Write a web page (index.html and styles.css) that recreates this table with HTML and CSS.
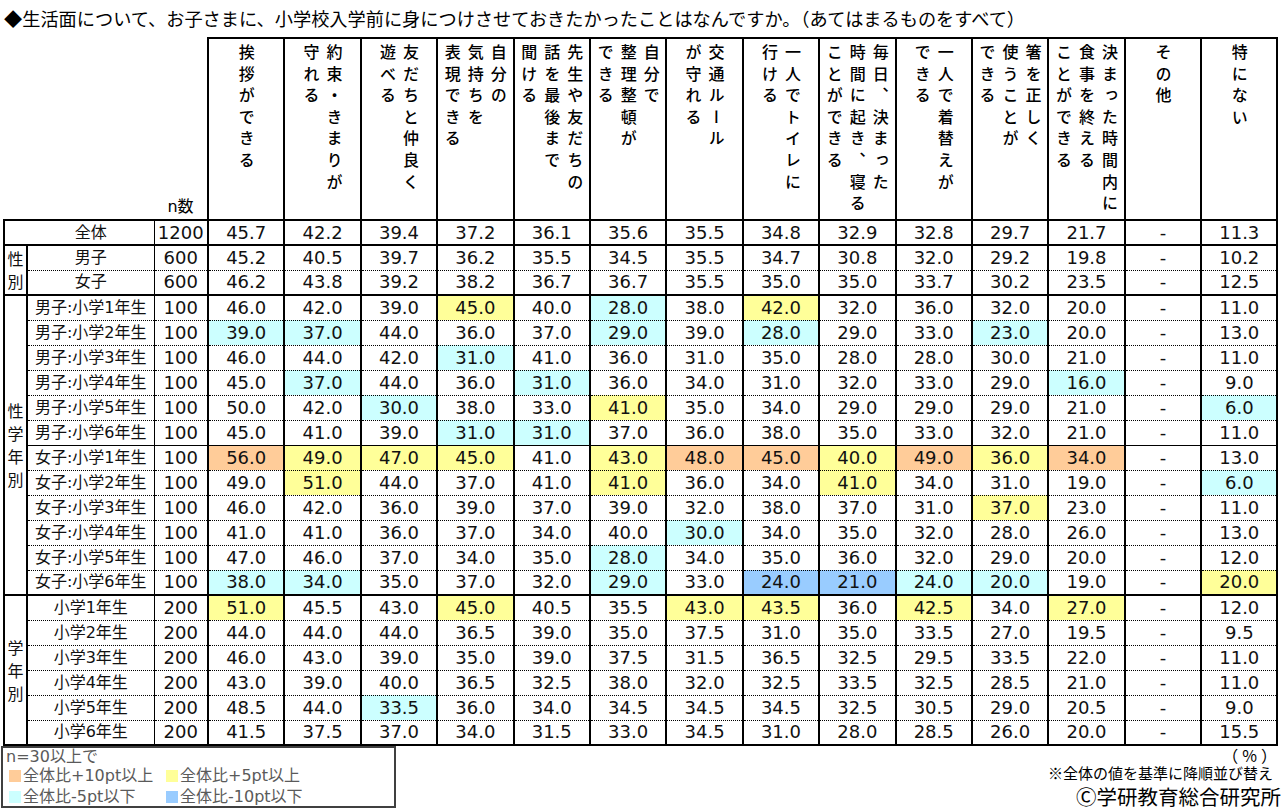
FILE: index.html
```html
<!DOCTYPE html>
<html lang="ja">
<head>
<meta charset="utf-8">
<title>生活面について</title>
<link rel="stylesheet" href="styles.css">
</head>
<body>
<div class="page">
  <div class="title">◆生活面について、お子さまに、小学校入学前に身につけさせておきたかったことはなんですか。（あてはまるものをすべて）</div>
  <table class="grid">
    <colgroup>
      <col class="c-grp"><col class="c-lbl"><col class="c-n">
      <col class="c-d"><col class="c-d"><col class="c-d"><col class="c-d"><col class="c-d"><col class="c-d"><col class="c-d">
      <col class="c-d"><col class="c-d"><col class="c-d"><col class="c-d"><col class="c-d"><col class="c-d"><col class="c-d">
    </colgroup>
    <thead>
      <tr class="head">
        <th class="blank" colspan="2"></th>
        <th class="nh">n数</th>
        <th class="h"><div class="hw"><div class="vt">挨拶ができる</div></div></th>
        <th class="h"><div class="hw"><div class="vt">約束・きまりが<br>守れる</div></div></th>
        <th class="h"><div class="hw"><div class="vt">友だちと仲良く<br>遊べる</div></div></th>
        <th class="h"><div class="hw"><div class="vt">自分の<br>気持ちを<br>表現できる</div></div></th>
        <th class="h"><div class="hw"><div class="vt">先生や友だちの<br>話を最後まで<br>聞ける</div></div></th>
        <th class="h"><div class="hw"><div class="vt">自分で<br>整理整頓が<br>できる</div></div></th>
        <th class="h"><div class="hw"><div class="vt">交通ルール<br>が守れる</div></div></th>
        <th class="h"><div class="hw"><div class="vt">一人でトイレに<br>行ける</div></div></th>
        <th class="h"><div class="hw"><div class="vt">毎日、決まった<br>時間に起き、寝る<br>ことができる</div></div></th>
        <th class="h"><div class="hw"><div class="vt">一人で着替えが<br>できる</div></div></th>
        <th class="h"><div class="hw"><div class="vt">箸を正しく<br>使うことが<br>できる</div></div></th>
        <th class="h"><div class="hw"><div class="vt">決まった時間内に<br>食事を終える<br>ことができる</div></div></th>
        <th class="h"><div class="hw"><div class="vt">その他</div></div></th>
        <th class="h"><div class="hw"><div class="vt">特にない</div></div></th>
      </tr>
    </thead>
    <tbody>
      <tr class="all">
        <td class="lbl tot" colspan="2">全体</td><td class="n">1200</td>
        <td class="d">45.7</td><td class="d">42.2</td><td class="d">39.4</td><td class="d">37.2</td><td class="d">36.1</td><td class="d">35.6</td><td class="d">35.5</td><td class="d">34.8</td><td class="d">32.9</td><td class="d">32.8</td><td class="d">29.7</td><td class="d">21.7</td><td class="d">-</td><td class="d">11.3</td>
      </tr>
      <tr>
        <td class="grp" rowspan="2">性<br>別</td>
        <td class="lbl">男子</td><td class="n">600</td>
        <td class="d">45.2</td><td class="d">40.5</td><td class="d">39.7</td><td class="d">36.2</td><td class="d">35.5</td><td class="d">34.5</td><td class="d">35.5</td><td class="d">34.7</td><td class="d">30.8</td><td class="d">32.0</td><td class="d">29.2</td><td class="d">19.8</td><td class="d">-</td><td class="d">10.2</td>
      </tr>
      <tr class="gend">
        <td class="lbl">女子</td><td class="n">600</td>
        <td class="d">46.2</td><td class="d">43.8</td><td class="d">39.2</td><td class="d">38.2</td><td class="d">36.7</td><td class="d">36.7</td><td class="d">35.5</td><td class="d">35.0</td><td class="d">35.0</td><td class="d">33.7</td><td class="d">30.2</td><td class="d">23.5</td><td class="d">-</td><td class="d">12.5</td>
      </tr>
      <tr>
        <td class="grp" rowspan="12">性<br>学<br>年<br>別</td>
        <td class="lbl">男子:小学1年生</td><td class="n">100</td>
        <td class="d">46.0</td><td class="d">42.0</td><td class="d">39.0</td><td class="d y">45.0</td><td class="d">40.0</td><td class="d c">28.0</td><td class="d">38.0</td><td class="d y">42.0</td><td class="d">32.0</td><td class="d">36.0</td><td class="d">32.0</td><td class="d">20.0</td><td class="d">-</td><td class="d">11.0</td>
      </tr>
      <tr>
        <td class="lbl">男子:小学2年生</td><td class="n">100</td>
        <td class="d c">39.0</td><td class="d c">37.0</td><td class="d">44.0</td><td class="d">36.0</td><td class="d">37.0</td><td class="d c">29.0</td><td class="d">39.0</td><td class="d c">28.0</td><td class="d">29.0</td><td class="d">33.0</td><td class="d c">23.0</td><td class="d">20.0</td><td class="d">-</td><td class="d">13.0</td>
      </tr>
      <tr>
        <td class="lbl">男子:小学3年生</td><td class="n">100</td>
        <td class="d">46.0</td><td class="d">44.0</td><td class="d">42.0</td><td class="d c">31.0</td><td class="d">41.0</td><td class="d">36.0</td><td class="d">31.0</td><td class="d">35.0</td><td class="d">28.0</td><td class="d">28.0</td><td class="d">30.0</td><td class="d">21.0</td><td class="d">-</td><td class="d">11.0</td>
      </tr>
      <tr>
        <td class="lbl">男子:小学4年生</td><td class="n">100</td>
        <td class="d">45.0</td><td class="d c">37.0</td><td class="d">44.0</td><td class="d">36.0</td><td class="d c">31.0</td><td class="d">36.0</td><td class="d">34.0</td><td class="d">31.0</td><td class="d">32.0</td><td class="d">33.0</td><td class="d">29.0</td><td class="d c">16.0</td><td class="d">-</td><td class="d">9.0</td>
      </tr>
      <tr>
        <td class="lbl">男子:小学5年生</td><td class="n">100</td>
        <td class="d">50.0</td><td class="d">42.0</td><td class="d c">30.0</td><td class="d">38.0</td><td class="d">33.0</td><td class="d y">41.0</td><td class="d">35.0</td><td class="d">34.0</td><td class="d">29.0</td><td class="d">29.0</td><td class="d">29.0</td><td class="d">21.0</td><td class="d">-</td><td class="d c">6.0</td>
      </tr>
      <tr class="mid">
        <td class="lbl">男子:小学6年生</td><td class="n">100</td>
        <td class="d">45.0</td><td class="d">41.0</td><td class="d">39.0</td><td class="d c">31.0</td><td class="d c">31.0</td><td class="d">37.0</td><td class="d">36.0</td><td class="d">38.0</td><td class="d">35.0</td><td class="d">33.0</td><td class="d">32.0</td><td class="d">21.0</td><td class="d">-</td><td class="d">11.0</td>
      </tr>
      <tr>
        <td class="lbl">女子:小学1年生</td><td class="n">100</td>
        <td class="d o">56.0</td><td class="d y">49.0</td><td class="d y">47.0</td><td class="d y">45.0</td><td class="d">41.0</td><td class="d y">43.0</td><td class="d o">48.0</td><td class="d o">45.0</td><td class="d y">40.0</td><td class="d o">49.0</td><td class="d y">36.0</td><td class="d o">34.0</td><td class="d">-</td><td class="d">13.0</td>
      </tr>
      <tr>
        <td class="lbl">女子:小学2年生</td><td class="n">100</td>
        <td class="d">49.0</td><td class="d y">51.0</td><td class="d">44.0</td><td class="d">37.0</td><td class="d">41.0</td><td class="d y">41.0</td><td class="d">36.0</td><td class="d">34.0</td><td class="d y">41.0</td><td class="d">34.0</td><td class="d">31.0</td><td class="d">19.0</td><td class="d">-</td><td class="d c">6.0</td>
      </tr>
      <tr>
        <td class="lbl">女子:小学3年生</td><td class="n">100</td>
        <td class="d">46.0</td><td class="d">42.0</td><td class="d">36.0</td><td class="d">39.0</td><td class="d">37.0</td><td class="d">39.0</td><td class="d">32.0</td><td class="d">38.0</td><td class="d">37.0</td><td class="d">31.0</td><td class="d y">37.0</td><td class="d">23.0</td><td class="d">-</td><td class="d">11.0</td>
      </tr>
      <tr>
        <td class="lbl">女子:小学4年生</td><td class="n">100</td>
        <td class="d">41.0</td><td class="d">41.0</td><td class="d">36.0</td><td class="d">37.0</td><td class="d">34.0</td><td class="d">40.0</td><td class="d c">30.0</td><td class="d">34.0</td><td class="d">35.0</td><td class="d">32.0</td><td class="d">28.0</td><td class="d">26.0</td><td class="d">-</td><td class="d">13.0</td>
      </tr>
      <tr>
        <td class="lbl">女子:小学5年生</td><td class="n">100</td>
        <td class="d">47.0</td><td class="d">46.0</td><td class="d">37.0</td><td class="d">34.0</td><td class="d">35.0</td><td class="d c">28.0</td><td class="d">34.0</td><td class="d">35.0</td><td class="d">36.0</td><td class="d">32.0</td><td class="d">29.0</td><td class="d">20.0</td><td class="d">-</td><td class="d">12.0</td>
      </tr>
      <tr class="gend">
        <td class="lbl">女子:小学6年生</td><td class="n">100</td>
        <td class="d c">38.0</td><td class="d c">34.0</td><td class="d">35.0</td><td class="d">37.0</td><td class="d">32.0</td><td class="d c">29.0</td><td class="d">33.0</td><td class="d b">24.0</td><td class="d b">21.0</td><td class="d c">24.0</td><td class="d c">20.0</td><td class="d">19.0</td><td class="d">-</td><td class="d y">20.0</td>
      </tr>
      <tr>
        <td class="grp" rowspan="6">学<br>年<br>別</td>
        <td class="lbl">小学1年生</td><td class="n">200</td>
        <td class="d y">51.0</td><td class="d">45.5</td><td class="d">43.0</td><td class="d y">45.0</td><td class="d">40.5</td><td class="d">35.5</td><td class="d y">43.0</td><td class="d y">43.5</td><td class="d">36.0</td><td class="d y">42.5</td><td class="d">34.0</td><td class="d y">27.0</td><td class="d">-</td><td class="d">12.0</td>
      </tr>
      <tr>
        <td class="lbl">小学2年生</td><td class="n">200</td>
        <td class="d">44.0</td><td class="d">44.0</td><td class="d">44.0</td><td class="d">36.5</td><td class="d">39.0</td><td class="d">35.0</td><td class="d">37.5</td><td class="d">31.0</td><td class="d">35.0</td><td class="d">33.5</td><td class="d">27.0</td><td class="d">19.5</td><td class="d">-</td><td class="d">9.5</td>
      </tr>
      <tr>
        <td class="lbl">小学3年生</td><td class="n">200</td>
        <td class="d">46.0</td><td class="d">43.0</td><td class="d">39.0</td><td class="d">35.0</td><td class="d">39.0</td><td class="d">37.5</td><td class="d">31.5</td><td class="d">36.5</td><td class="d">32.5</td><td class="d">29.5</td><td class="d">33.5</td><td class="d">22.0</td><td class="d">-</td><td class="d">11.0</td>
      </tr>
      <tr>
        <td class="lbl">小学4年生</td><td class="n">200</td>
        <td class="d">43.0</td><td class="d">39.0</td><td class="d">40.0</td><td class="d">36.5</td><td class="d">32.5</td><td class="d">38.0</td><td class="d">32.0</td><td class="d">32.5</td><td class="d">33.5</td><td class="d">32.5</td><td class="d">28.5</td><td class="d">21.0</td><td class="d">-</td><td class="d">11.0</td>
      </tr>
      <tr>
        <td class="lbl">小学5年生</td><td class="n">200</td>
        <td class="d">48.5</td><td class="d">44.0</td><td class="d c">33.5</td><td class="d">36.0</td><td class="d">34.0</td><td class="d">34.5</td><td class="d">34.5</td><td class="d">34.5</td><td class="d">32.5</td><td class="d">30.5</td><td class="d">29.0</td><td class="d">20.5</td><td class="d">-</td><td class="d">9.0</td>
      </tr>
      <tr class="gend">
        <td class="lbl">小学6年生</td><td class="n">200</td>
        <td class="d">41.5</td><td class="d">37.5</td><td class="d">37.0</td><td class="d">34.0</td><td class="d">31.5</td><td class="d">33.0</td><td class="d">34.5</td><td class="d">31.0</td><td class="d">28.0</td><td class="d">28.5</td><td class="d">26.0</td><td class="d">20.0</td><td class="d">-</td><td class="d">15.5</td>
      </tr>
    </tbody>
  </table>
  <div class="foot">
    <div class="legend">
      <div class="lrow first">n=30以上で</div>
      <div class="lrow">
        <span class="item"><span class="sw sw-o"></span>全体比+10pt以上</span>
        <span class="item"><span class="sw sw-y"></span>全体比+5pt以上</span>
      </div>
      <div class="lrow">
        <span class="item"><span class="sw sw-c"></span>全体比-5pt以下</span>
        <span class="item"><span class="sw sw-b"></span>全体比-10pt以下</span>
      </div>
    </div>
    <div class="notes">
      <div class="pct">（%）</div>
      <div class="sort">※全体の値を基準に降順並び替え</div>
      <div class="copy">Ⓒ学研教育総合研究所</div>
    </div>
  </div>
</div>
</body>
</html>
```

FILE: styles.css
```css
* { box-sizing: border-box; }

body {
  margin: 0;
  background: #fff;
  color: #000;
  font-family: "DejaVu Sans", "Noto Sans CJK JP", sans-serif;
}

.page {
  width: 1281px;
  height: 810px;
  overflow: hidden;
}

.title {
  height: 37px;
  line-height: 37px;
  padding-left: 4px;
  font-family: "Noto Sans CJK JP", sans-serif;
  font-size: 18.2px;
  white-space: nowrap;
}

.grid {
  border-collapse: collapse;
  table-layout: fixed;
  width: 1274px;
  margin-left: 3px;
}

.c-grp { width: 23px; }
.c-lbl { width: 127px; }
.c-n { width: 54px; }
.c-d { width: 76.4px; }

.grid th {
  padding: 0;
  font-weight: normal;
}

.grid th.blank { border: none; }

.grid th.nh {
  border: none;
  vertical-align: bottom;
  font-size: 16px;
  line-height: 20px;
  padding-bottom: 2px;
  font-family: "DejaVu Sans", "Noto Sans CJK JP", sans-serif;
}

.grid th.h {
  border: 2px solid #000;
  vertical-align: top;
  height: 182px;
  padding-top: 5px;
}

.hw {
  display: flex;
  justify-content: center;
}

.vt {
  writing-mode: vertical-rl;
  font-family: "Noto Sans CJK JP", sans-serif;
  font-size: 16px;
  font-weight: 500;
  line-height: 23px;
  letter-spacing: 5.6px;
  text-align: left;
}

.grid td {
  padding: 0;
  height: 25px;
  line-height: 22px;
  text-align: center;
  vertical-align: middle;
  white-space: nowrap;
  border-bottom: 1px dotted #000;
  color: #111;
}

.grid td.d {
  border-left: 2px solid #000;
  border-right: 2px solid #000;
  font-size: 18px;
}

.grid td.n {
  border-left: 1px solid #000;
  border-right: 2px solid #000;
  font-size: 18px;
}

.grid td.lbl {
  border-left: 2px solid #000;
  border-right: 1px solid #000;
  font-size: 16px;
}

.grid td.tot { padding-left: 23px; }

.grid td.grp {
  border: 2px solid #000;
  font-family: "Noto Sans CJK JP", sans-serif;
  font-size: 16px;
  line-height: 23px;
  text-align: center;
  padding-left: 0;
}

.grid tr.all td {
  border-top: 2px solid #000;
  border-bottom: 2px solid #000;
}

.grid tr.gend td { border-bottom: 2px solid #000; }
.grid tr.mid td { border-bottom: 1px solid #000; }

.grid td.o { background: #ffcc99; }
.grid td.y { background: #ffff99; }
.grid td.c { background: #ccffff; }
.grid td.b { background: #99ccff; }

.foot {
  display: flex;
  justify-content: space-between;
  align-items: flex-start;
}

.legend {
  width: 395px;
  height: 62px;
  margin-left: 1px;
  border: 2px solid #404040;
  padding: 0 0 0 3px;
  color: #5a5a5a;
  font-size: 16px;
  line-height: 21px;
}

.lrow {
  display: flex;
  white-space: nowrap;
  height: 21px;
}

.lrow.first {
  height: 17px;
  line-height: 17px;
}

.item {
  display: flex;
  align-items: center;
  width: 157px;
}

.sw {
  display: inline-block;
  width: 12px;
  height: 12px;
  margin: 0 2px 0 3px;
}

.sw-o { background: #ffcc99; }
.sw-y { background: #ffff99; }
.sw-c { background: #ccffff; }
.sw-b { background: #99ccff; }

.notes {
  display: flex;
  flex-direction: column;
  align-items: flex-end;
}

.pct {
  font-family: "Noto Sans CJK JP", sans-serif;
  font-size: 16px;
  line-height: 16px;
  letter-spacing: 4px;
  margin-top: 1px;
}

.sort {
  font-family: "Noto Sans CJK JP", sans-serif;
  font-size: 15px;
  line-height: 17px;
  margin-top: 1px;
  margin-right: 8px;
}

.copy {
  font-family: "Noto Sans CJK JP", sans-serif;
  font-size: 20.5px;
  line-height: 24px;
  margin-top: 3px;
}
```
